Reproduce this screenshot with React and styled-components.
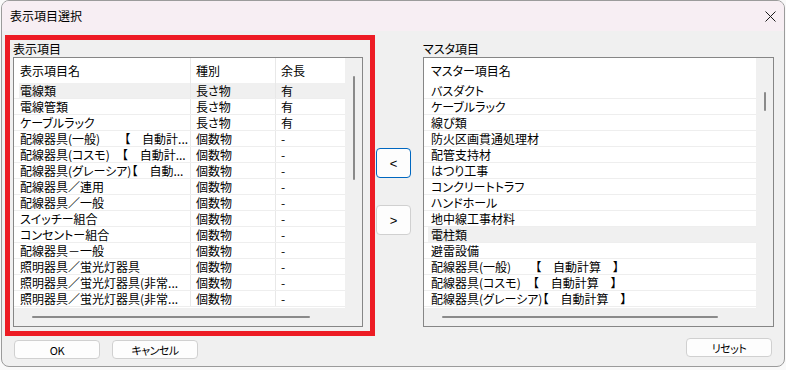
import React from "react";
import styled, { createGlobalStyle } from "styled-components";

const GlobalStyle = createGlobalStyle`
  html, body {
    margin: 0;
    padding: 0;
    background: #f9f9f9;
  }
  body {
    font-family: "Noto Sans CJK JP", "Noto Sans", sans-serif;
    font-size: 12px;
    color: #000;
    font-feature-settings: "palt";
  }
  * {
    box-sizing: border-box;
  }
`;

const Window = styled.div`
  width: 784px;
  height: 367px;
  margin-left: 1px;
  border: 1px solid #9b9b9b;
  border-radius: 8px;
  background: #f0f0f0;
  overflow: hidden;
  display: flex;
  flex-direction: column;
`;

const TitleBar = styled.div`
  height: 30px;
  flex: none;
  background: #f7eef3;
  display: flex;
  align-items: center;
  justify-content: space-between;
  padding: 0 8px;
`;

const TitleText = styled.span`
  font-size: 12px;
  line-height: 16px;
`;

const Body = styled.div`
  flex: 1;
  padding-top: 4px;
  display: flex;
  flex-direction: column;
`;

const Main = styled.div`
  display: flex;
  height: 301px;
  padding-left: 3px;
`;

const Highlight = styled.div`
  width: 370px;
  border: 5px solid #ed1c24;
  padding: 0 7px 4px 3px;
  display: flex;
  flex-direction: column;
`;

const Group = styled.div`
  width: 351px;
  padding: 5px 0 9px 0;
  display: flex;
  flex-direction: column;
`;

const GroupLabel = styled.div`
  height: 17px;
  line-height: 17px;
  flex: none;
`;

const ListBox = styled.div`
  flex: 1;
  border: 1px solid #868686;
  background: #fff;
  display: grid;
  grid-template-columns: 1fr 17px;
  grid-template-rows: 1fr 18px;
  overflow: hidden;
`;

const Rows = styled.div`
  overflow: hidden;
  display: flex;
  flex-direction: column;
`;

const Line = styled.div`
  flex: none;
  height: ${(p) => (p.$header ? "25px" : "16px")};
  padding-left: ${(p) => p.$inset}px;
  border-bottom: ${(p) => (p.$header ? "none" : "1px solid #eeeeee")};
  display: flex;
`;

const Cells = styled.div`
  flex: 1;
  display: grid;
  grid-template-columns: ${(p) => p.$cols};
  background: ${(p) => (p.$selected ? "#f0f0f0" : "transparent")};
`;

const Cell = styled.div`
  padding-left: ${(p) => (p.$first ? p.$pad : 5)}px;
  border-left: ${(p) => (p.$first ? "none" : "1px solid #e8e8e8")};
  white-space: nowrap;
  overflow: hidden;
  display: flex;
  align-items: center;
  line-height: 15px;
`;

const VTrack = styled.div`
  grid-column: 2;
  grid-row: 1 / 3;
  background: #f0f0f0;
  display: flex;
  justify-content: center;
`;

const VThumb = styled.div`
  width: 2px;
  height: ${(p) => p.$size}px;
  margin-top: ${(p) => p.$offset}px;
  background: #8a8a8a;
  border-radius: 1px;
`;

const HTrack = styled.div`
  grid-column: 1;
  grid-row: 2;
  background: #f0f0f0;
  display: flex;
  align-items: center;
  padding-left: 18px;
`;

const HThumb = styled.div`
  height: 2px;
  width: ${(p) => p.$size}px;
  background: #8a8a8a;
  border-radius: 1px;
`;

const Middle = styled.div`
  width: 48px;
  padding: 113px 0 0 1px;
  display: flex;
  flex-direction: column;
  gap: 27px;
`;

const MoveButton = styled.div`
  width: 35px;
  height: 30px;
  border: 1px solid ${(p) => (p.$focused ? "#0067c0" : "#d0d0d0")};
  border-radius: 4px;
  background: #fdfdfd;
  display: flex;
  align-items: center;
  justify-content: center;
  font-family: "Liberation Sans", sans-serif;
  font-size: 13px;
`;

const Footer = styled.div`
  display: flex;
  align-items: flex-start;
  padding: 4px 12px 0 12px;
`;

const ActionButton = styled.div`
  width: 86px;
  height: 19px;
  margin-left: ${(p) => p.$gap || 0}px;
  margin-top: ${(p) => p.$lift || 0}px;
  border: 1px solid #d0d0d0;
  border-radius: 4px;
  background: #fdfdfd;
  display: flex;
  align-items: center;
  justify-content: center;
  font-size: 11px;
  letter-spacing: -0.5px;
`;

const Spacer = styled.div`
  flex: 1;
`;

const leftCols = "171px 85px 69px";

const leftRows = [
  ["電線類", "長さ物", "有"],
  ["電線管類", "長さ物", "有"],
  ["ケーブルラック", "長さ物", "有"],
  ["配線器具(一般)　　【　自動計...", "個数物", "-"],
  ["配線器具(コスモ)　【　自動計...", "個数物", "-"],
  ["配線器具(グレーシア)【　自動...", "個数物", "-"],
  ["配線器具／連用", "個数物", "-"],
  ["配線器具／一般", "個数物", "-"],
  ["スイッチー組合", "個数物", "-"],
  ["コンセントー組合", "個数物", "-"],
  ["配線器具－一般", "個数物", "-"],
  ["照明器具／蛍光灯器具", "個数物", "-"],
  ["照明器具／蛍光灯器具(非常...", "個数物", "-"],
  ["照明器具／蛍光灯器具(非常...", "個数物", "-"],
];

const masterRows = [
  "バスダクト",
  "ケーブルラック",
  "線ぴ類",
  "防火区画貫通処理材",
  "配管支持材",
  "はつり工事",
  "コンクリートトラフ",
  "ハンドホール",
  "地中線工事材料",
  "電柱類",
  "避雷設備",
  "配線器具(一般)　　【　自動計算　】",
  "配線器具(コスモ)　【　自動計算　】",
  "配線器具(グレーシア)【　自動計算　】",
];

function CloseIcon() {
  return (
    <svg width="11" height="11" viewBox="0 0 11 11">
      <path d="M0.5 0.5 L10.5 10.5 M10.5 0.5 L0.5 10.5" stroke="#1a1a1a" strokeWidth="1" />
    </svg>
  );
}

function App() {
  return (
    <>
      <GlobalStyle />
      <Window>
        <TitleBar>
          <TitleText>表示項目選択</TitleText>
          <CloseIcon />
        </TitleBar>
        <Body>
          <Main>
            <Highlight>
              <GroupLabel>表示項目</GroupLabel>
              <ListBox>
                <Rows>
                  <Line $header $inset={5}>
                    <Cells $cols={leftCols}>
                      <Cell $first $pad={1}>表示項目名</Cell>
                      <Cell>種別</Cell>
                      <Cell>余長</Cell>
                    </Cells>
                  </Line>
                  {leftRows.map((row, i) => (
                    <Line key={i} $inset={5}>
                      <Cells $cols={leftCols} $selected={i === 0}>
                        <Cell $first $pad={1}>{row[0]}</Cell>
                        <Cell>{row[1]}</Cell>
                        <Cell>{row[2]}</Cell>
                      </Cells>
                    </Line>
                  ))}
                </Rows>
                <VTrack>
                  <VThumb $offset={18} $size={104} />
                </VTrack>
                <HTrack>
                  <HThumb $size={278} />
                </HTrack>
              </ListBox>
            </Highlight>
            <Middle>
              <MoveButton $focused>&lt;</MoveButton>
              <MoveButton>&gt;</MoveButton>
            </Middle>
            <Group>
              <GroupLabel>マスタ項目</GroupLabel>
              <ListBox>
                <Rows>
                  <Line $header $inset={4}>
                    <Cells $cols="1fr">
                      <Cell $first $pad={3}>マスター項目名</Cell>
                    </Cells>
                  </Line>
                  {masterRows.map((name, i) => (
                    <Line key={i} $inset={4}>
                      <Cells $cols="1fr" $selected={name === "電柱類"}>
                        <Cell $first $pad={3}>{name}</Cell>
                      </Cells>
                    </Line>
                  ))}
                </Rows>
                <VTrack>
                  <VThumb $offset={34} $size={19} />
                </VTrack>
                <HTrack>
                  <HThumb $size={276} />
                </HTrack>
              </ListBox>
            </Group>
          </Main>
          <Footer>
            <ActionButton>OK</ActionButton>
            <ActionButton $gap={12}>キャンセル</ActionButton>
            <Spacer />
            <ActionButton $lift={-2}>リセット</ActionButton>
          </Footer>
        </Body>
      </Window>
    </>
  );
}

export default App;
